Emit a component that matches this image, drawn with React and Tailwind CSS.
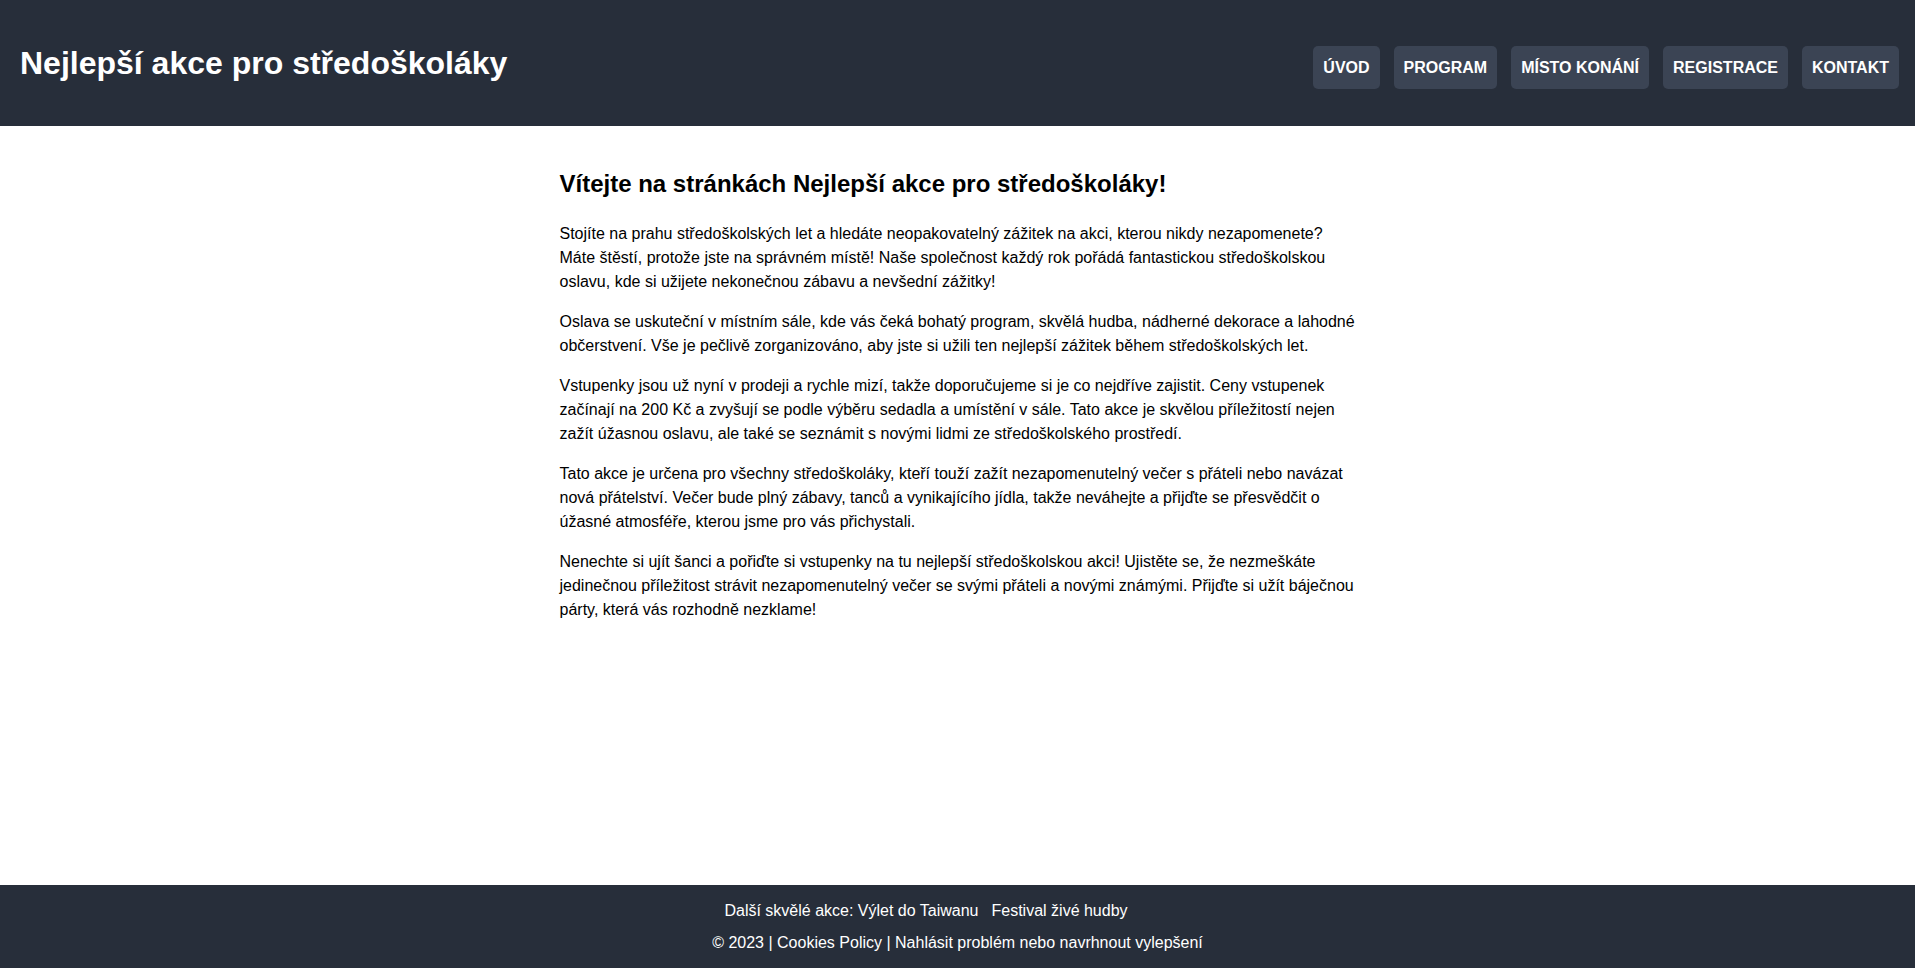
import React from 'react';

const navItems = ['ÚVOD', 'PROGRAM', 'MÍSTO KONÁNÍ', 'REGISTRACE', 'KONTAKT'];

const paragraphs = [
    'Stojíte na prahu středoškolských let a hledáte neopakovatelný zážitek na akci, kterou nikdy nezapomenete? Máte štěstí, protože jste na správném místě! Naše společnost každý rok pořádá fantastickou středoškolskou oslavu, kde si užijete nekonečnou zábavu a nevšední zážitky!',
    'Oslava se uskuteční v místním sále, kde vás čeká bohatý program, skvělá hudba, nádherné dekorace a lahodné občerstvení. Vše je pečlivě zorganizováno, aby jste si užili ten nejlepší zážitek během středoškolských let.',
    'Vstupenky jsou už nyní v prodeji a rychle mizí, takže doporučujeme si je co nejdříve zajistit. Ceny vstupenek začínají na 200 Kč a zvyšují se podle výběru sedadla a umístění v sále. Tato akce je skvělou příležitostí nejen zažít úžasnou oslavu, ale také se seznámit s novými lidmi ze středoškolského prostředí.',
    'Tato akce je určena pro všechny středoškoláky, kteří touží zažít nezapomenutelný večer s přáteli nebo navázat nová přátelství. Večer bude plný zábavy, tanců a vynikajícího jídla, takže neváhejte a přijďte se přesvědčit o úžasné atmosféře, kterou jsme pro vás přichystali.',
    'Nenechte si ujít šanci a pořiďte si vstupenky na tu nejlepší středoškolskou akci! Ujistěte se, že nezmeškáte jedinečnou příležitost strávit nezapomenutelný večer se svými přáteli a novými známými. Přijďte si užít báječnou párty, která vás rozhodně nezklame!',
];

export default function App() {
    return (
        <div className="min-h-screen flex flex-col bg-white text-black font-['Liberation_Sans',Arial,sans-serif] text-base leading-normal">
            {/* header */}
            <header className="h-[126px] shrink-0 bg-[#272e3a] flex justify-between items-center pl-5 pr-4">
                <h1 className="text-[32px] font-bold text-white leading-[normal]">Nejlepší akce pro středoškoláky</h1>
                <nav className="flex gap-[14px] mt-[9px]">
                    {navItems.map((item) => (
                        <a
                            key={item}
                            href="#"
                            className="h-[43px] px-[10px] flex items-center rounded-[5px] bg-[#3b4454] text-white font-bold text-base"
                        >
                            {item}
                        </a>
                    ))}
                </nav>
            </header>

            {/* main content */}
            <main className="flex-1 w-[804px] mx-auto pl-1 pt-5">
                <h2 className="text-2xl leading-[36px] font-bold mt-5 mb-5">Vítejte na stránkách Nejlepší akce pro středoškoláky!</h2>
                {paragraphs.map((text, i) => (
                    <p key={i} className="mb-4">{text}</p>
                ))}
            </main>

            {/* footer */}
            <footer className="h-[83px] shrink-0 bg-[#272e3a] text-white flex flex-col items-center justify-center gap-2">
                <div className="pr-[63px]">
                    Další skvělé akce: <a href="#">Výlet do Taiwanu</a>
                    <a href="#" className="ml-[13px]">Festival živé hudby</a>
                </div>
                <div>
                    © 2023 | <a href="#">Cookies Policy</a> | <a href="#">Nahlásit problém nebo navrhnout vylepšení</a>
                </div>
            </footer>
        </div>
    );
}
